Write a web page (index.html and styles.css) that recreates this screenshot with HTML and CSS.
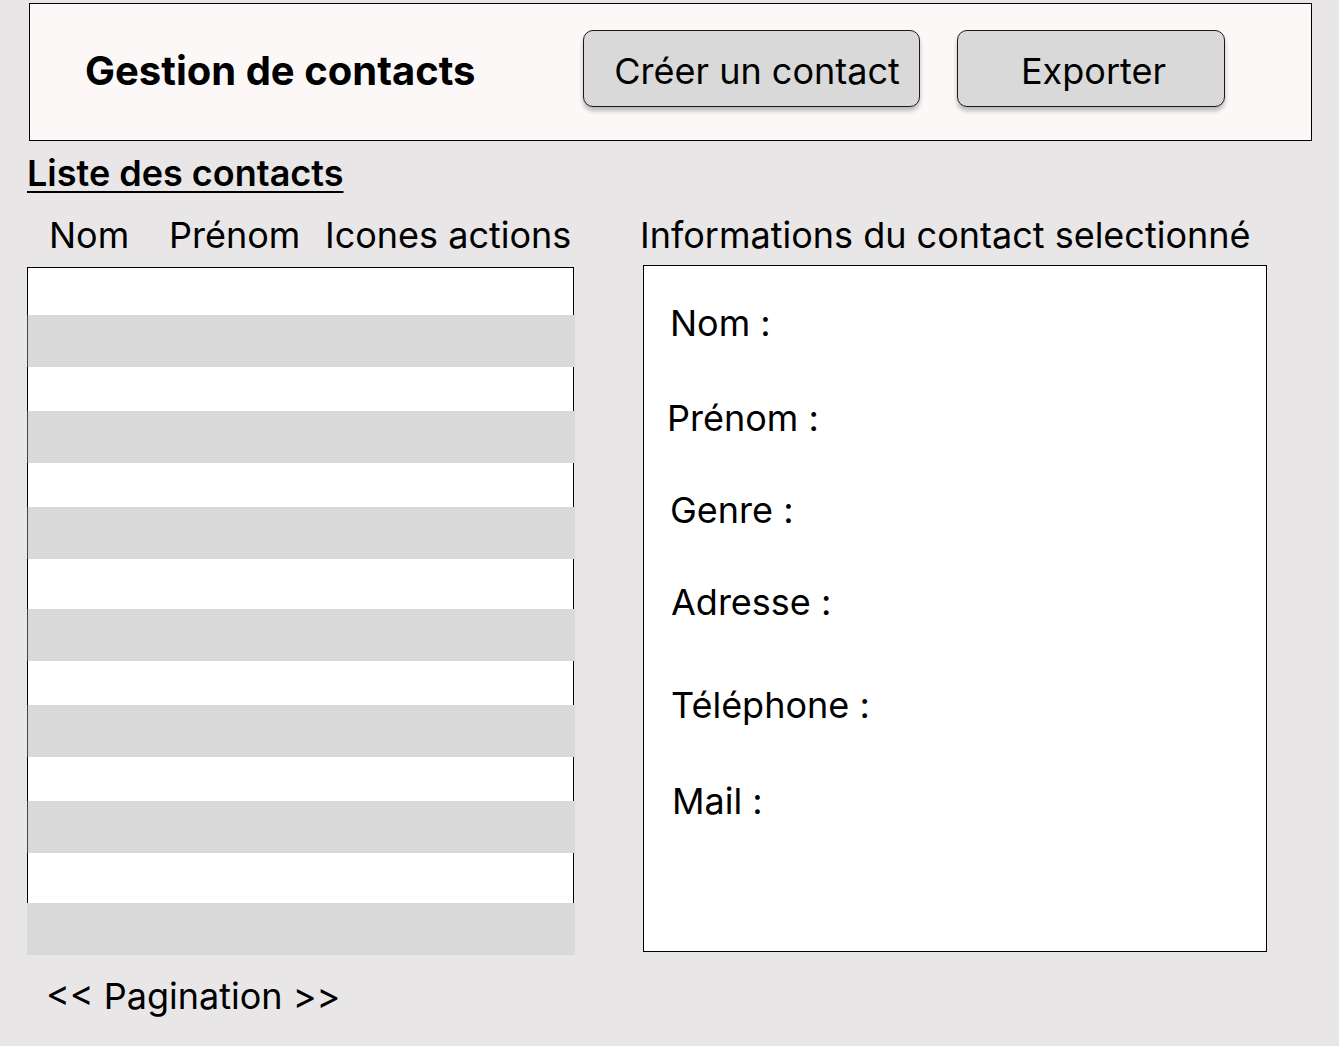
FILE: index.html
```html
<!DOCTYPE html>
<html lang="fr">
<head>
<meta charset="utf-8">
<title>Gestion de contacts</title>
<link rel="stylesheet" href="styles.css">
</head>
<body>
<div class="page">
  <header class="header">
    <h1 class="title">Gestion de contacts</h1>
    <div class="actions">
      <button class="btn btn-create">Créer un contact</button>
      <button class="btn btn-export">Exporter</button>
    </div>
  </header>

  <h2 class="section-title">Liste des contacts</h2>

  <main class="main">
    <section class="list-col">
      <div class="col-heads">
        <span>Nom</span>
        <span>Prénom</span>
        <span>Icones actions</span>
      </div>
      <div class="list">
        <div class="row w first"></div>
        <div class="row g"></div>
        <div class="row w"></div>
        <div class="row g"></div>
        <div class="row w"></div>
        <div class="row g"></div>
        <div class="row w tall"></div>
        <div class="row g"></div>
        <div class="row w"></div>
        <div class="row g"></div>
        <div class="row w"></div>
        <div class="row g"></div>
        <div class="row w tall"></div>
        <div class="row g last"></div>
      </div>
      <div class="pagination">&lt;&lt; Pagination &gt;&gt;</div>
    </section>

    <section class="info-col">
      <div class="info-head">Informations du contact selectionné</div>
      <div class="panel">
        <div class="field f-nom">Nom :</div>
        <div class="field f-prenom">Prénom :</div>
        <div class="field f-genre">Genre :</div>
        <div class="field f-adresse">Adresse :</div>
        <div class="field f-tel">Téléphone :</div>
        <div class="field f-mail">Mail :</div>
      </div>
    </section>
  </main>
</div>
</body>
</html>
```

FILE: styles.css
```css
* { box-sizing: border-box; }

html, body {
  margin: 0;
  padding: 0;
  background: #e8e6e7;
}

body {
  font-family: Inter, "Noto Sans", "Liberation Sans", sans-serif;
  color: #000;
  width: 1339px;
  height: 1046px;
  overflow: hidden;
}

.page {
  padding: 3px 0 0 27px;
}

.header {
  margin-left: 2px;
  width: 1283px;
  height: 138px;
  border: 1px solid #000;
  background: #fdf8f8;
  display: flex;
  align-items: center;
}

.title {
  flex: 0 0 553px;
  margin: 0;
  padding-left: 55px;
  font-size: 40px;
  font-weight: 700;
  line-height: 48px;
  position: relative;
  top: -1px;
}

.actions {
  display: flex;
  gap: 37px;
  align-self: flex-start;
  margin-top: 26px;
}

.btn {
  height: 77px;
  border: 1px solid #1a1a1a;
  border-radius: 10px;
  background: #d9d9d9;
  box-shadow: 0 4px 4px rgba(0, 0, 0, 0.25);
  font-family: inherit;
  font-size: 36px;
  font-weight: 400;
  color: #000;
  padding: 5px 0 0 0;
  cursor: pointer;
}

.btn-create { width: 337px; padding-left: 11px; }
.btn-export { width: 268px; padding-left: 5px; }

.section-title {
  display: inline-block;
  margin: 12px 0 0 0;
  font-size: 36px;
  font-weight: 600;
  line-height: 40px;
  text-decoration: underline;
  text-decoration-thickness: 2px;
  text-underline-offset: 5px;
}

.main {
  display: flex;
  align-items: flex-start;
}

.list-col {
  width: 548px;
  flex: 0 0 548px;
}

.col-heads {
  display: grid;
  grid-template-columns: 120px 156px auto;
  padding-left: 22px;
  font-size: 36px;
  line-height: 44px;
  height: 68px;
  padding-top: 14px;
  margin-top: 6px;
}

.list {
  display: flex;
  flex-direction: column;
}

.row { width: 548px; }

.row.w {
  width: 547px;
  height: 44px;
  background: #fff;
  border-left: 1px solid #000;
  border-right: 1px solid #000;
}

.row.w.first {
  height: 48px;
  border-top: 1px solid #000;
}

.row.w.tall { height: 50px; }

.row.g {
  height: 52px;
  background: #d9d9d9;
  border-left: 1px solid #444;
}

.row.g.last { border-left: none; }

.pagination {
  margin-top: 19px;
  padding-left: 19px;
  font-size: 36px;
  line-height: 44px;
}

.info-col {
  margin-left: 68px;
  width: 626px;
}

.info-head {
  font-size: 36px;
  line-height: 44px;
  height: 66px;
  padding-top: 14px;
  margin-top: 6px;
  margin-left: -3px;
  white-space: nowrap;
}

.panel {
  width: 624px;
  height: 687px;
  background: #fff;
  border: 1px solid #000;
  padding-top: 35px;
}

.field {
  font-size: 36px;
  line-height: 44px;
  padding-left: 26px;
}

.f-prenom { margin-top: 51px; padding-left: 23px; }
.f-genre { margin-top: 48px; }
.f-adresse { margin-top: 48px; padding-left: 27px; }
.f-tel { margin-top: 59px; padding-left: 27px; }
.f-mail { margin-top: 52px; padding-left: 28px; }
```
